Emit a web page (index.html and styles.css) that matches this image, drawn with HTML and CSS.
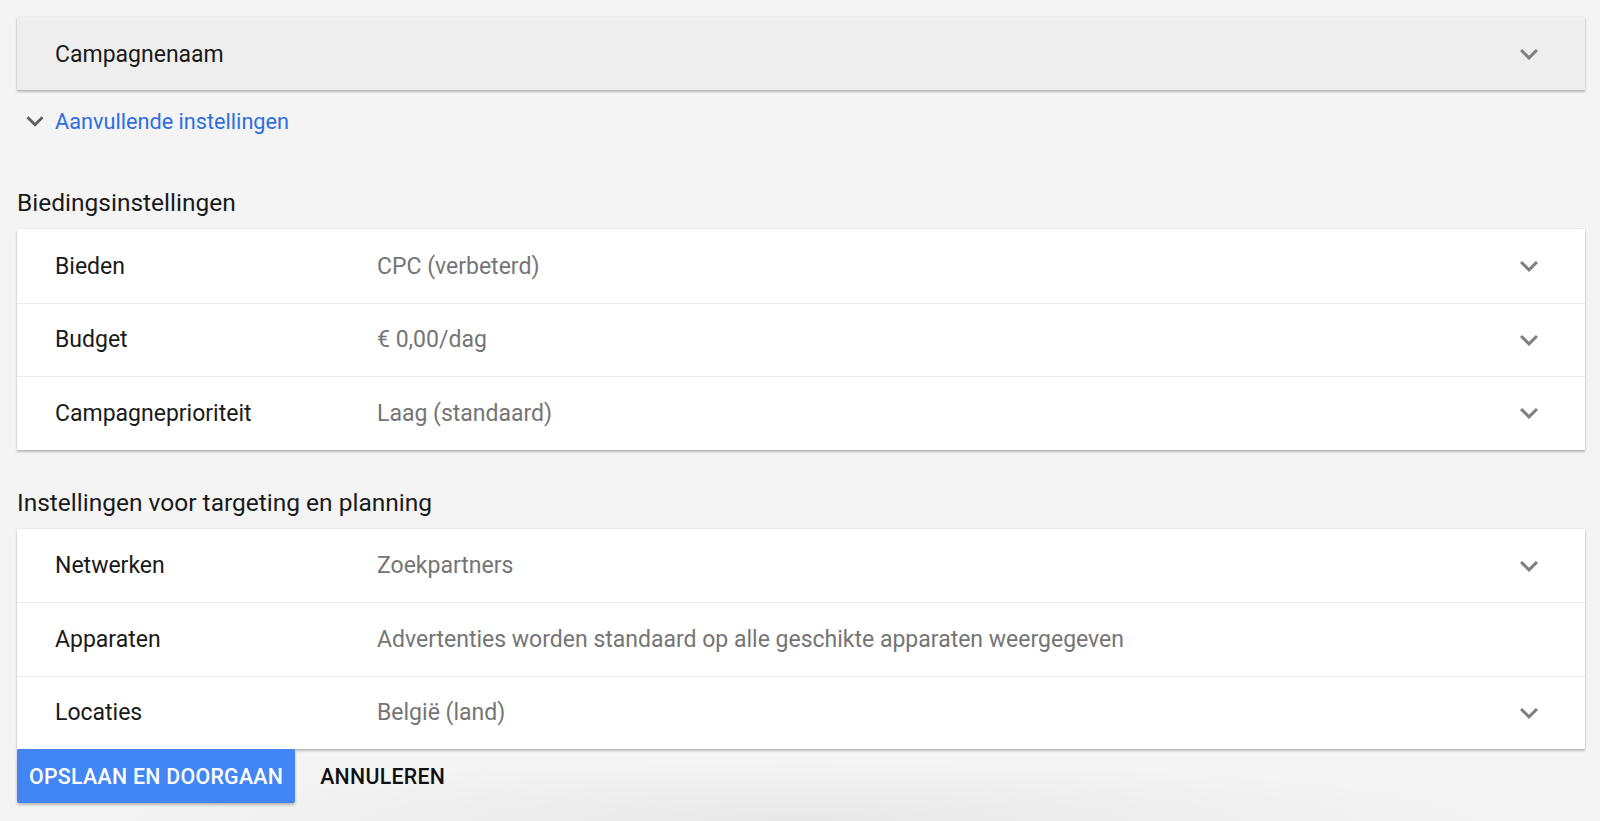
FILE: index.html
```html
<!DOCTYPE html>
<html lang="nl">
<head>
<meta charset="utf-8">
<title>Campagne-instellingen</title>
<link rel="stylesheet" href="styles.css">
</head>
<body>
<main class="page">
  <section class="card card-collapsed">
    <div class="row">
      <span class="label">Campagnenaam</span>
      <svg class="chev" viewBox="0 0 24 24"><path d="M16.59 8.59L12 13.17 7.41 8.59 6 10l6 6 6-6z"/></svg>
    </div>
  </section>

  <a class="more-link" href="#">
    <svg class="link-chev" viewBox="0 0 24 24"><path d="M16.59 8.59L12 13.17 7.41 8.59 6 10l6 6 6-6z"/></svg>
    <span>Aanvullende instellingen</span>
  </a>

  <h2 class="section-title first">Biedingsinstellingen</h2>
  <section class="card">
    <div class="row">
      <span class="label">Bieden</span>
      <span class="value">CPC (verbeterd)</span>
      <svg class="chev" viewBox="0 0 24 24"><path d="M16.59 8.59L12 13.17 7.41 8.59 6 10l6 6 6-6z"/></svg>
    </div>
    <div class="row">
      <span class="label">Budget</span>
      <span class="value">€ 0,00/dag</span>
      <svg class="chev" viewBox="0 0 24 24"><path d="M16.59 8.59L12 13.17 7.41 8.59 6 10l6 6 6-6z"/></svg>
    </div>
    <div class="row">
      <span class="label">Campagneprioriteit</span>
      <span class="value">Laag (standaard)</span>
      <svg class="chev" viewBox="0 0 24 24"><path d="M16.59 8.59L12 13.17 7.41 8.59 6 10l6 6 6-6z"/></svg>
    </div>
  </section>

  <h2 class="section-title">Instellingen voor targeting en planning</h2>
  <section class="card">
    <div class="row">
      <span class="label">Netwerken</span>
      <span class="value">Zoekpartners</span>
      <svg class="chev" viewBox="0 0 24 24"><path d="M16.59 8.59L12 13.17 7.41 8.59 6 10l6 6 6-6z"/></svg>
    </div>
    <div class="row">
      <span class="label">Apparaten</span>
      <span class="value">Advertenties worden standaard op alle geschikte apparaten weergegeven</span>
    </div>
    <div class="row">
      <span class="label">Locaties</span>
      <span class="value">België (land)</span>
      <svg class="chev" viewBox="0 0 24 24"><path d="M16.59 8.59L12 13.17 7.41 8.59 6 10l6 6 6-6z"/></svg>
    </div>
  </section>

  <div class="actions">
    <button class="btn btn-primary" type="button">OPSLAAN EN DOORGAAN</button>
    <button class="btn btn-flat" type="button">ANNULEREN</button>
  </div>
</main>
</body>
</html>
```

FILE: styles.css
```css
html, body {
  margin: 0;
  padding: 0;
}
body {
  background: #f4f4f4;
  font-family: Roboto, "Noto Sans", Arial, sans-serif;
  color: #1a1a1a;
  height: 821px;
  overflow: hidden;
  background-image: radial-gradient(ellipse 700px 60px at 50% 100%, rgba(0,0,0,0.05), rgba(0,0,0,0) 100%);
  background-repeat: no-repeat;
}
.page {
  padding: 17px 15px 0 17px;
}
.card {
  background: #fff;
  box-shadow: 0 2px 2px rgba(0,0,0,0.22), 0 0 2px rgba(0,0,0,0.12);
}
.card-collapsed {
  background: #eeeeee;
}
.row {
  height: 72.5px;
  display: flex;
  align-items: center;
  padding: 0 38px;
  border-top: 1px solid #ececec;
}
.row:first-child {
  border-top-color: transparent;
}
.card-collapsed .row {
  height: 72px;
}
.label {
  width: 322px;
  flex: none;
  font-size: 23px;
  color: #1a1a1a;
}
.value {
  flex: 1;
  font-size: 23px;
  color: #757575;
}
.chev {
  width: 36px;
  height: 36px;
  fill: #7f7f7f;
  margin-left: auto;
  flex: none;
}
.more-link {
  display: flex;
  align-items: center;
  height: 32px;
  margin-top: 15px;
  color: #2f6ede;
  text-decoration: none;
  font-size: 21.7px;
}
.link-chev {
  width: 34px;
  height: 34px;
  fill: #5f5f5f;
  margin-left: 1px;
  margin-right: 3px;
}
.section-title {
  margin: 0;
  font-weight: 400;
  font-size: 24.5px;
  color: #1a1a1a;
  height: 52px;
  line-height: 52px;
  margin-top: 27px;
}
.section-title.first {
  margin-top: 40px;
}
.actions {
  display: flex;
  align-items: center;
  gap: 13px;
}
.btn {
  font-family: Roboto, "Noto Sans", Arial, sans-serif;
  font-weight: 500;
  font-size: 21.3px;
  border: none;
  cursor: pointer;
  height: 54px;
  padding: 0 12px;
  letter-spacing: 0.3px;
}
.btn-primary {
  background: #4285f4;
  color: #fff;
  border-radius: 2px;
  box-shadow: 0 2px 3px rgba(0,0,0,0.25);
}
.btn-flat {
  background: transparent;
  color: #111;
}
```
